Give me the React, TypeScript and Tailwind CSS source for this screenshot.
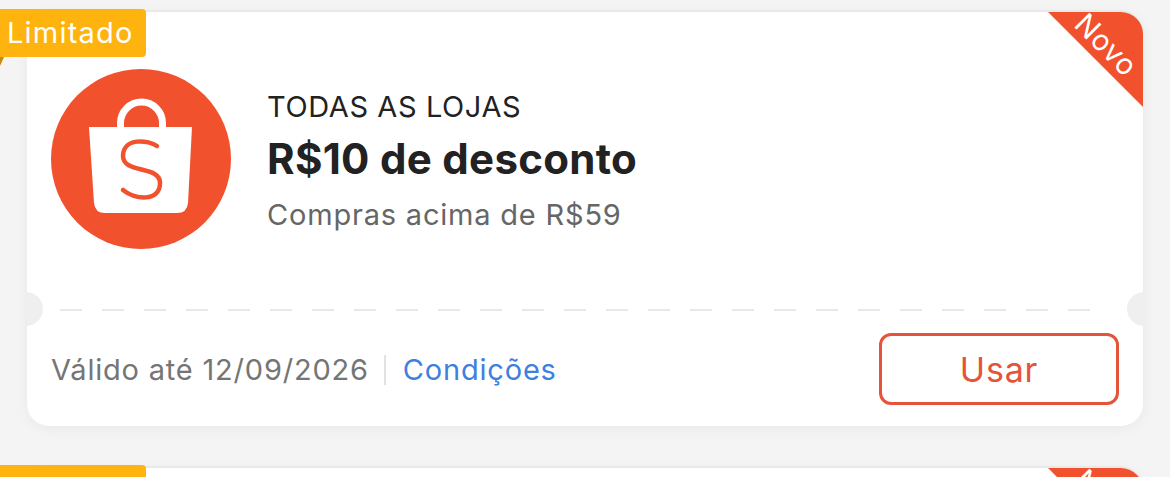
import React from 'react';

const ShopeeLogo = () => (
  <svg width="180" height="180" viewBox="0 0 180 180" className="shrink-0">
    <circle cx="90" cy="90" r="90" fill="#f2512d" />
    <path
      d="M38 58 H141 L137 134 Q136 144 126 144 H54 Q44 144 43 134 Z"
      fill="#fff"
    />
    <path
      d="M69.5 60 V54 A21 21 0 0 1 111.5 54 V60"
      fill="none"
      stroke="#fff"
      strokeWidth="7"
    />
    <path
      d="M106 77 C98 71 72 68 72 87 C72 105 109 96 109 114 C109 133 84 131 72 121"
      fill="none"
      stroke="#f2512d"
      strokeWidth="4.5"
      strokeLinecap="round"
    />
  </svg>
);

const LimitedTag = () => (
  <div className="absolute left-[-27px] top-[-3px] z-10">
    <div className="flex h-[48px] w-[146px] items-center rounded-r-[4px] bg-[#ffb30f] pl-[7px] text-[29px] tracking-[1.2px] text-white">
      Limitado
    </div>
    <div className="h-0 w-0 border-r-[4px] border-t-[9px] border-r-transparent border-t-[#c98a06]" />
  </div>
);

const NewRibbon = () => (
  <div className="absolute right-0 top-0 h-[95px] w-[95px] overflow-hidden rounded-tr-[22px]">
    <div className="h-full w-full bg-[#f2512d] [clip-path:polygon(0_0,100%_0,100%_100%)]" />
    <span className="absolute left-[21px] top-[17px] rotate-45 text-[29px] leading-[32px] tracking-[0.6px] text-white">
      Novo
    </span>
  </div>
);

const Notch = ({ side }: { side: 'left' | 'right' }) => (
  <div
    className={`absolute top-[280px] h-[34px] w-[16px] overflow-hidden ${
      side === 'left' ? 'left-0' : 'right-0'
    }`}
  >
    <div
      className={`absolute top-0 h-[34px] w-[34px] rounded-full bg-[#efefef] ${
        side === 'left' ? 'right-0' : 'left-0'
      }`}
    />
  </div>
);

export default function App() {
  return (
    <div className="flex h-[477px] w-[1170px] flex-col gap-[42px] overflow-hidden bg-[#f4f4f4] px-[27px] pt-[12px] font-['Inter','Liberation_Sans',sans-serif]">
      <div className="relative h-[414px] w-[1116px] shrink-0 rounded-[22px] bg-white shadow-[0_-2px_0_#e9e9e9,0_2px_14px_rgba(0,0,0,0.05)]">
        <LimitedTag />
        <NewRibbon />
        <Notch side="left" />
        <Notch side="right" />

        <div className="flex items-center gap-[37px] pl-[24px] pt-[57px]">
          <ShopeeLogo />
          <div className="-ml-[1px] flex flex-col pt-[4px]">
            <span className="text-[29px] leading-[34px] tracking-[0.6px] text-[#222]">TODAS AS LOJAS</span>
            <span className="mt-[12px] text-[42px] font-bold leading-[46px] tracking-[0.3px] text-[#222]">R$10 de desconto</span>
            <span className="mt-[16px] text-[29px] leading-[34px] tracking-[0.8px] text-[#666]">Compras acima de R$59</span>
          </div>
        </div>

        <div className="ml-[33px] mt-[60px] h-[2px] w-[1030px] bg-[repeating-linear-gradient(90deg,#e8e8e8_0_22px,transparent_22px_42px)]" />

        <div className="flex items-center justify-between pl-[24px] pr-[24px] pt-[22px]">
          <div className="flex items-center pt-[2px] text-[29px] tracking-[0.8px]">
            <span className="text-[#757575]">Válido até 12/09/2026</span>
            <span className="ml-[15px] mr-[17px] h-[30px] w-[2px] bg-[#e2e2e2]" />
            <span className="text-[#3f7fe0]">Condições</span>
          </div>
          <button className="h-[72px] w-[240px] rounded-[12px] border-[3px] border-[#e5533a] text-[34px] tracking-[0.8px] text-[#e5533a]">
            Usar
          </button>
        </div>
      </div>

      <div className="relative h-[414px] w-[1116px] shrink-0 rounded-[22px] bg-white shadow-[0_-2px_0_#e9e9e9,0_2px_14px_rgba(0,0,0,0.05)]">
        <LimitedTag />
        <NewRibbon />
      </div>
    </div>
  );
}
